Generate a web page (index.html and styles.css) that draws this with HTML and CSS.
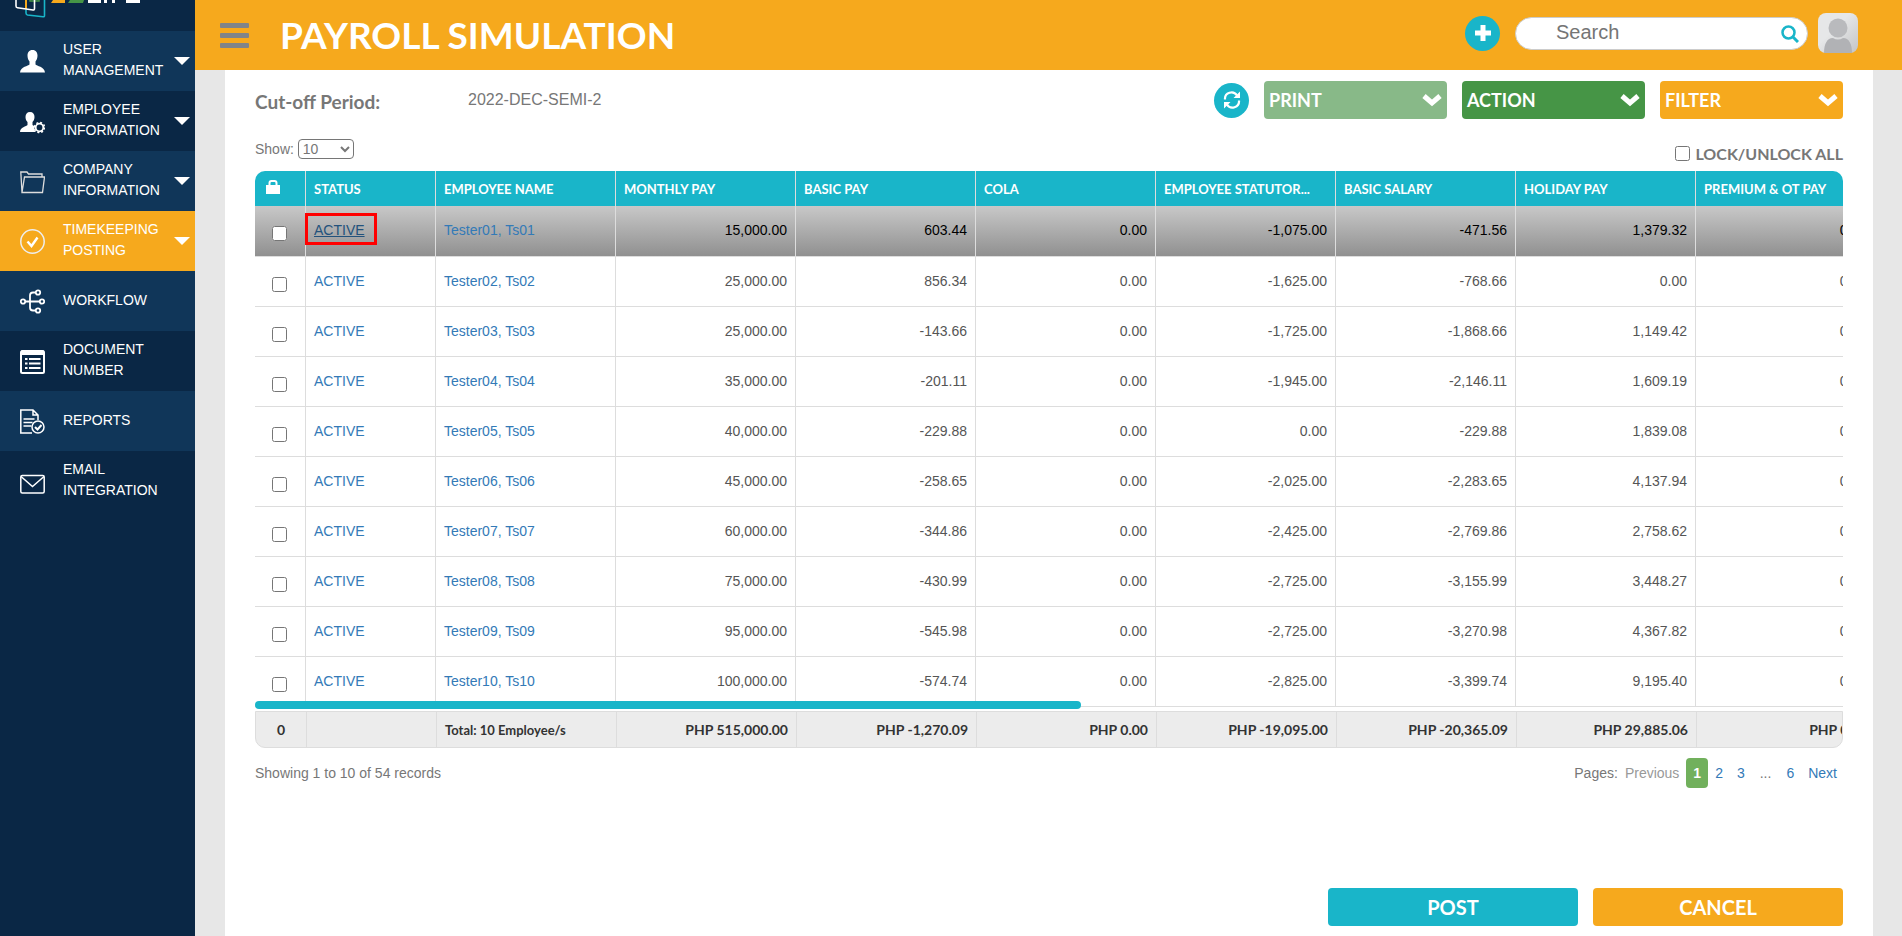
FILE: index.html
```html
<!DOCTYPE html>
<html lang="en">
<head>
  <meta charset="UTF-8">
  <meta name="viewport" content="width=device-width, initial-scale=1">
  <title>Payroll Simulation</title>
  <link rel="stylesheet" href="styles.css">
</head>
<body>

<aside class="sidebar">
  <div class="logo">
    <svg width="150" height="31" viewBox="0 0 150 31">
      <path d="M30 0V1H39V0" fill="none" stroke="#469546" stroke-width="1.500"/>
      <path d="M26 0V9" stroke="#f6a91d" stroke-width="2"/>
      <path d="M44.500 0V15.500q0 1.500-1.500 1.300L27.500 15q-1.500-.3-1.500-2V9.500" fill="none" stroke="#19b5c9" stroke-width="1.600"/>
      <path d="M16 0V6q0 1.500 1.500 1.700L33 10q1.500 .2 1.500-1.500V0" fill="none" stroke="#fff" stroke-width="1.600"/>
      <path d="M53 0H65V3H51z" fill="#f6a91d"/>
      <path d="M70 0H84L83 3H68z" fill="#469546"/>
      <path d="M88 0H101V3H88zM104 0H107V3H104zM112 0H115V3H112zM126 0H140V3H126z" fill="#fff"/>
    </svg>
  </div>
  <nav class="menu">
    <a href="#">
      <svg class="icon" viewBox="0 0 25 25"><path d="M12.500 1c3.500 0 5 2.500 5 5.500 0 2.500-.8 4.500-2 6v3c1 1.600 9 2 9.500 8H0c.5-6 8.500-6.400 9.500-8v-3c-1.200-1.500-2-3.500-2-6 0-3 1.500-5.500 5-5.500z" fill="#fff"/></svg>
      <span>USER MANAGEMENT</span><i class="caret"></i>
    </a>
    <a href="#">
      <svg class="icon" viewBox="0 0 25 25"><path d="M10 3c3 0 4.500 2 4.500 5 0 2-.8 4-2 5v3l2.500 1.500c-1 2-.5 4.500 1 5.500H0c0-5 6.500-5.500 7.500-7v-3c-1.200-1-2-3-2-5 0-3 1.500-5 4.500-5z" fill="#fff"/><circle cx="19.500" cy="18.500" r="3.800" fill="none" stroke="#fff" stroke-width="1.800"/><circle cx="19.500" cy="18.500" r="5" fill="none" stroke="#fff" stroke-width="1.500" stroke-dasharray="2 1.930"/></svg>
      <span>EMPLOYEE INFORMATION</span><i class="caret"></i>
    </a>
    <a href="#">
      <svg class="icon" viewBox="0 0 25 25"><path d="M2 23.500L.8 3H7l1.500 2H22v3M2 23.500L4.500 8h20L22.500 23.500z" fill="none" stroke="#ddd" stroke-width="1.300"/></svg>
      <span>COMPANY INFORMATION</span><i class="caret"></i>
    </a>
    <a href="#" class="active">
      <svg class="icon" viewBox="0 0 25 25"><circle cx="12.500" cy="12.500" r="11.700" fill="none" stroke="#eee" stroke-width="1.500"/><path d="M7.500 12.500l4 4.500 6-8.500" fill="none" stroke="#fff" stroke-width="2.400"/></svg>
      <span>TIMEKEEPING POSTING</span><i class="caret"></i>
    </a>
    <a href="#">
      <svg class="icon" viewBox="0 0 25 25" fill="none" stroke="#fff" stroke-width="1.800"><path d="M5 12.500h15M16 3.500h-3q-3 0-3 3v12q0 3 3 3h3"/><circle cx="3" cy="12.500" r="2.200"/><circle cx="22" cy="12.500" r="2.200"/><circle cx="18" cy="3.500" r="2.200"/><circle cx="18" cy="21.500" r="2.200"/></svg>
      <span>WORKFLOW</span>
    </a>
    <a href="#">
      <svg class="icon" viewBox="0 0 25 25"><rect x="1" y="2" width="23" height="22" rx="1.500" fill="none" stroke="#fff" stroke-width="2"/><path d="M1 1.500h23V6H1z" fill="#fff"/><path d="M5 10h2.500M5 14.500h2.500M5 19h2.500M9 10h11.500M9 14.500h11.500M9 19h11.500" stroke="#fff" stroke-width="2"/></svg>
      <span>DOCUMENT NUMBER</span>
    </a>
    <a href="#">
      <svg class="icon" viewBox="0 0 25 25" fill="none" stroke="#fff" stroke-width="1.500"><path d="M12 24H.8V1H13l5 5v5M13 1v5h5M3.500 10h11M3.500 13.500h9M3.500 17h8"/><circle cx="18" cy="18" r="6"/><path d="M15 18l2.500 2.500 4-4.500" stroke-width="2"/></svg>
      <span>REPORTS</span>
    </a>
    <a href="#">
      <svg class="icon" viewBox="0 0 25 25" fill="none" stroke="#fff" stroke-width="1.500"><rect x=".8" y="6.500" width="23.400" height="17.500" rx="1.500"/><path d="M1 7.500l11.500 10L24 7.500"/></svg>
      <span>EMAIL INTEGRATION</span>
    </a>
  </nav>
</aside>

<div class="page">
  <header class="topbar">
    <button type="button" class="burger" aria-label="Menu"><i></i><i></i><i></i></button>
    <h1>PAYROLL SIMULATION</h1>
    <button type="button" class="round" aria-label="Add">
      <svg width="16" height="16" viewBox="0 0 16 16"><path d="M8 0v16M0 8h16" stroke="#fff" stroke-width="5"/></svg>
    </button>
    <form class="search">
      <input type="text" placeholder="Search" aria-label="Search">
      <button type="submit" aria-label="Go">
        <svg width="18" height="18" viewBox="0 0 18 18" fill="none" stroke="#19b5c9"><circle cx="7.500" cy="7.500" r="6" stroke-width="2.500"/><path d="M12 12l5 5" stroke-width="3"/></svg>
      </button>
    </form>
    <svg class="avatar" viewBox="0 0 40 40">
      <defs><linearGradient id="bg" x1="0" y1="0" x2="1" y2="1"><stop offset=".4" stop-color="#e6e7e8"/><stop offset="1" stop-color="#c3c4c6"/></linearGradient></defs>
      <rect width="40" height="40" rx="8" fill="url(#bg)"/>
      <circle cx="20" cy="15" r="9.500" fill="#b9babd"/>
      <path d="M6 40c0-9 3-15 9-15q5 3 10 0c6 0 9 6 9 15z" fill="#b1b2b5"/>
    </svg>
  </header>

  <main class="panel">
    <div class="toolbar">
      <span class="label">Cut-off Period:</span>
      <span class="period">2022-DEC-SEMI-2</span>
      <button type="button" class="round" aria-label="Refresh">
        <svg width="20" height="20" viewBox="0 0 20 20" fill="none" stroke="#fff" stroke-width="2.200"><path d="M3 9.500a6.500 6.500 0 0 1 12-4M17 10.500a6.500 6.500 0 0 1-12 4"/><path d="M18 1.500v6.500h-6.500zM2 18.500V12h6.500z" fill="#fff" stroke="none"/></svg>
      </button>
      <button type="button" class="drop print">PRINT <svg width="20" height="14" viewBox="0 0 20 14"><path d="M2 3l8 7 8-7" fill="none" stroke="#fff" stroke-width="5"/></svg></button>
      <button type="button" class="drop action">ACTION <svg width="20" height="14" viewBox="0 0 20 14"><path d="M2 3l8 7 8-7" fill="none" stroke="#fff" stroke-width="5"/></svg></button>
      <button type="button" class="drop filter">FILTER <svg width="20" height="14" viewBox="0 0 20 14"><path d="M2 3l8 7 8-7" fill="none" stroke="#fff" stroke-width="5"/></svg></button>
    </div>

    <div class="options">
      <div class="show">
        <label for="show">Show:</label>
        <select id="show"><option>10</option><option>25</option><option>50</option></select>
      </div>
      <label class="lock-all"><input type="checkbox"> LOCK/UNLOCK ALL</label>
    </div>

    <div class="grid">
      <div class="grid-view">
        <table>
          <colgroup><col class="c-lock"><col class="c-status"><col span="8"></colgroup>
          <thead>
            <tr>
              <th><svg width="14" height="14" viewBox="0 0 14 14"><path d="M0 5h14v9H0z" fill="#fff"/><path d="M3.500 6V3q0-2 2-2h3q2 0 2 2v3" fill="none" stroke="#fff" stroke-width="2"/></svg></th>
              <th>STATUS</th>
              <th>EMPLOYEE NAME</th>
              <th>MONTHLY PAY</th>
              <th>BASIC PAY</th>
              <th>COLA</th>
              <th>EMPLOYEE STATUTOR...</th>
              <th>BASIC SALARY</th>
              <th>HOLIDAY PAY</th>
              <th>PREMIUM &amp; OT PAY</th>
            </tr>
          </thead>
          <tbody id="rows"></tbody>
        </table>
      </div>
      <div class="scrollbar"></div>
    </div>

    <div class="totals">
      <table>
        <colgroup><col class="c-lock"><col class="c-status"><col span="8"></colgroup>
        <tbody>
          <tr>
            <td class="count">0</td>
            <td></td>
            <td class="people">Total: 10 Employee/s</td>
            <td>PHP 515,000.00</td>
            <td>PHP -1,270.09</td>
            <td>PHP 0.00</td>
            <td>PHP -19,095.00</td>
            <td>PHP -20,365.09</td>
            <td>PHP 29,885.06</td>
            <td>PHP 0.00</td>
          </tr>
        </tbody>
      </table>
    </div>

    <div class="pager">
      <span>Showing 1 to 10 of 54 records</span>
      <nav class="pages">
        <span>Pages:</span>
        <span class="off">Previous</span>
        <strong>1</strong>
        <a href="#">2</a>
        <a href="#">3</a>
        <span class="dots">...</span>
        <a href="#">6</a>
        <a href="#">Next</a>
      </nav>
    </div>

    <div class="actions">
      <button type="button" class="post">POST</button>
      <button type="button" class="cancel">CANCEL</button>
    </div>
  </main>
</div>

<script>
  const data = [
    ["Tester01, Ts01", "15,000.00", "603.44", "0.00", "-1,075.00", "-471.56", "1,379.32", "0.00"],
    ["Tester02, Ts02", "25,000.00", "856.34", "0.00", "-1,625.00", "-768.66", "0.00", "0.00"],
    ["Tester03, Ts03", "25,000.00", "-143.66", "0.00", "-1,725.00", "-1,868.66", "1,149.42", "0.00"],
    ["Tester04, Ts04", "35,000.00", "-201.11", "0.00", "-1,945.00", "-2,146.11", "1,609.19", "0.00"],
    ["Tester05, Ts05", "40,000.00", "-229.88", "0.00", "0.00", "-229.88", "1,839.08", "0.00"],
    ["Tester06, Ts06", "45,000.00", "-258.65", "0.00", "-2,025.00", "-2,283.65", "4,137.94", "0.00"],
    ["Tester07, Ts07", "60,000.00", "-344.86", "0.00", "-2,425.00", "-2,769.86", "2,758.62", "0.00"],
    ["Tester08, Ts08", "75,000.00", "-430.99", "0.00", "-2,725.00", "-3,155.99", "3,448.27", "0.00"],
    ["Tester09, Ts09", "95,000.00", "-545.98", "0.00", "-2,725.00", "-3,270.98", "4,367.82", "0.00"],
    ["Tester10, Ts10", "100,000.00", "-574.74", "0.00", "-2,825.00", "-3,399.74", "9,195.40", "0.00"]
  ];

  document.getElementById("rows").innerHTML = data.map((row, i) => {
    const name = row[0];
    const cells = row.slice(1).map(v => `<td>${v}</td>`).join("");
    return `<tr${i === 0 ? ' class="selected"' : ""}>
      <td class="lock"><input type="checkbox" aria-label="Lock ${name}"></td>
      <td class="text"><a href="#">ACTIVE</a></td>
      <td class="text"><a href="#">${name}</a></td>${cells}</tr>`;
  }).join("");
</script>

</body>
</html>
```
FILE: styles.css
```css
* {
  box-sizing: border-box;
}

body {
  margin: 0;
  display: flex;
  min-height: 100vh;
  background: #e7e7e7;
  color: #777;
  font-family: "Liberation Sans", Arial, sans-serif;
  font-size: 14px;
}

a {
  color: #337ab7;
  text-decoration: none;
}

button {
  border: none;
  padding: 0;
  cursor: pointer;
}

h1, th, .label, .drop, .lock-all, .totals, .actions button {
  font-family: Lato, sans-serif;
  font-weight: bold;
}

/* sidebar */
.sidebar {
  width: 195px;
  flex-shrink: 0;
  background: #0a2745;
}

.logo {
  height: 31px;
}

.logo svg {
  display: block;
}

.menu a {
  display: flex;
  align-items: center;
  height: 60px;
  padding: 0 5px 0 20px;
  color: #fff;
  font-size: 14px;
  line-height: 21px;
}

.menu a:nth-child(odd) {
  background: #103659;
}

.menu a.active {
  background: #f6a91d;
}

.menu span {
  flex: 1;
  margin-left: 18px;
  padding-bottom: 2px;
}

.icon {
  width: 25px;
  height: 25px;
  flex-shrink: 0;
}

.caret {
  border: 8px solid transparent;
  border-top-color: #fff;
  border-bottom: none;
}

/* top bar */
.page {
  flex: 1;
  min-width: 0;
  display: flex;
  flex-direction: column;
}

.topbar {
  display: flex;
  align-items: center;
  height: 70px;
  padding: 0 44px 4px 25px;
  background: #f6a91d;
}

.burger {
  display: grid;
  gap: 5px;
  width: 29px;
  margin: 4px 31px 0 0;
  background: none;
}

.burger i {
  height: 5px;
  border-radius: 1px;
  background: #808489;
}

h1 {
  flex: 1;
  margin: 0;
  padding-top: 2px;
  color: #fff;
  font-size: 37px;
}

.round {
  display: flex;
  align-items: center;
  justify-content: center;
  width: 35px;
  height: 35px;
  border-radius: 50%;
  background: #19b5c9;
}

.search {
  display: flex;
  align-items: center;
  width: 293px;
  height: 33px;
  margin: 0 10px 0 15px;
  padding: 0 8px 0 40px;
  border: 1px solid #ccc;
  border-radius: 17px;
  background: #fff;
}

.search input {
  flex: 1;
  min-width: 0;
  padding: 0 0 2px;
  border: none;
  outline: none;
  background: none;
  font-family: inherit;
  font-size: 20px;
}

.search button {
  height: 16px;
  background: none;
}

.avatar {
  width: 40px;
  height: 40px;
}

/* content */
.panel {
  flex: 1;
  margin: 0 29px 0 30px;
  padding: 11px 30px 10px;
  background: #fff;
}

.toolbar {
  display: flex;
  align-items: center;
  gap: 15px;
}

.label {
  width: 198px;
  padding-top: 2px;
  font-size: 19px;
}

.period {
  flex: 1;
  font-size: 16px;
}

.drop {
  display: flex;
  align-items: center;
  justify-content: space-between;
  width: 183px;
  height: 38px;
  padding: 0 5px;
  border-radius: 4px;
  color: #fff;
  font-size: 18px;
}

.print {
  background: #88b988;
}

.action {
  background: #469546;
}

.filter,
.cancel {
  background: #f6a91d;
}

.options {
  display: flex;
  justify-content: space-between;
  height: 52px;
  padding-top: 20px;
}

.show select {
  width: 56px;
  height: 20px;
  border: 1px solid #767676;
  border-radius: 4px;
  background: #fff;
  color: #777;
  font-family: inherit;
  font-size: 14px;
}

.lock-all {
  display: flex;
  align-items: center;
  gap: 5px;
  padding-bottom: 4px;
  font-size: 16px;
}

.lock-all input {
  width: 15px;
  height: 15px;
  margin: 0;
}

/* payroll grid */
.grid {
  position: relative;
}

.grid-view {
  overflow: hidden;
  border-radius: 10px 10px 0 0;
}

.scrollbar {
  position: absolute;
  left: 0;
  bottom: -2px;
  width: 52%;
  height: 8px;
  border-radius: 4px;
  background: #19b5c9;
}

table {
  width: 1621px;
  table-layout: fixed;
  border-collapse: separate;
  border-spacing: 0;
}

.c-lock {
  width: 51px;
}

.c-status {
  width: 130px;
}

th {
  height: 35px;
  padding: 0 8px;
  border-right: 1px solid #ddd;
  background: #19b5c9;
  color: #fff;
  font-size: 13px;
  text-align: left;
}

th:first-child {
  padding-left: 11px;
}

td {
  height: 50px;
  padding: 0 8px;
  border-right: 1px solid #ddd;
  color: #555;
  text-align: right;
}

#rows td {
  padding-bottom: 2px;
  border-bottom: 1px solid #ddd;
}

#rows .lock {
  padding: 4px 2px 0 0;
  text-align: center;
}

.lock input {
  width: 15px;
  height: 15px;
  margin: 0;
  vertical-align: middle;
}

#rows .text {
  text-align: left;
}

.selected {
  background: linear-gradient(#c8c8c8, #8f8f8f);
}

.selected td {
  height: 51px;
  color: #000;
}

.selected td:nth-child(2) {
  position: relative;
}

.selected td:nth-child(2) a {
  color: #23527c;
  text-decoration: underline;
}

/* highlight over the status link */
.selected td:nth-child(2)::after {
  content: "";
  position: absolute;
  box-sizing: border-box;
  top: 7px;
  left: -1px;
  width: 72px;
  height: 32px;
  border: 3px solid #f00;
  pointer-events: none;
}

.totals {
  margin-top: 4px;
  overflow: hidden;
  border: 1px solid #ddd;
  border-radius: 0 0 10px 10px;
  background: #ececec;
}

.totals td {
  height: 35px;
  color: #333;
  font-size: 14px;
}

.totals .count {
  text-align: center;
}

.totals .people {
  font-size: 13px;
  text-align: left;
}

/* pager */
.pager {
  display: flex;
  justify-content: space-between;
  align-items: center;
  margin-top: 10px;
}

.pages {
  display: flex;
  align-items: center;
  padding-right: 6px;
}

.pages .off {
  margin: 0 7px;
  color: #999;
}

.pages strong {
  padding: 0 7px;
  border-radius: 4px;
  background: #71b05c;
  color: #fff;
  line-height: 30px;
}

.pages a {
  padding: 0 7px;
}

.pages a:last-child {
  padding-right: 0;
}

.pages .dots {
  padding: 0 8px;
}

.actions {
  display: flex;
  justify-content: flex-end;
  gap: 15px;
  margin-top: 100px;
}

.actions button {
  width: 250px;
  height: 38px;
  border-radius: 4px;
  color: #fff;
  font-size: 20px;
}

.post {
  background: #19b5c9;
}
```
